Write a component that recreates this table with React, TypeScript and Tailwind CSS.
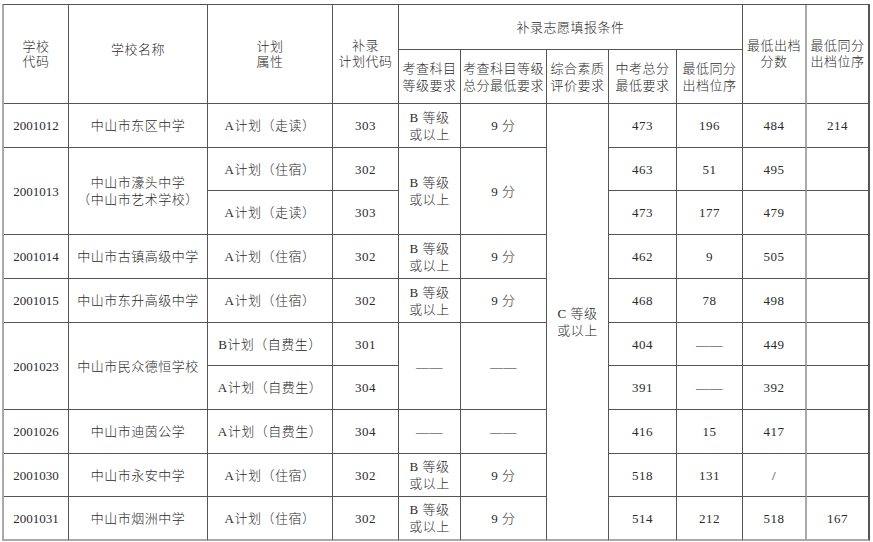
import type { ReactNode } from "react";

const base =
  "flex items-center justify-center text-center border-r border-b border-[#555] whitespace-pre-line";

function Cell({ children, className = "" }: { children?: ReactNode; className?: string }) {
  return <div className={`${base} ${className}`}>{children}</div>;
}

// last column keeps the heavy right edge
const R = "border-r-2";
// column "最低出档分数" has a lighter double-width line on its right
const L = "border-r-2 border-r-[#aaa]";
const B = "border-b-2 border-b-[#aaa]";

export default function App() {
  return (
    <div className="min-h-screen bg-white pt-[4px] pl-[2px]">
      <div
        className="grid w-max grid-cols-[65px_139px_125px_66px_62px_86px_62px_68px_66px_64px_63px] grid-rows-[45px_54px_44px_43px_44px_44px_44px_43px_44px_44px_43px_44px] border-t border-l-2 border-t-[#555] border-l-[#aaa] text-[13px] leading-[17px] tracking-[0.5px] font-light text-[#2b2b2b]"
        style={{ fontFamily: '"Liberation Serif", "Noto Sans CJK SC", serif' }}
      >
        {/* header */}
        <Cell className="row-span-2 leading-[15px]">{"学校\n代码"}</Cell>
        <Cell className="row-span-2 pb-[10px]">学校名称</Cell>
        <Cell className="row-span-2 leading-[15px]">{"计划\n属性"}</Cell>
        <Cell className="row-span-2 leading-[16px]">{"补录\n计划代码"}</Cell>
        <Cell className="col-span-5">补录志愿填报条件</Cell>
        <Cell className={`row-span-2 leading-[16px] ${L}`}>{"最低出档\n分数"}</Cell>
        <Cell className={`row-span-2 leading-[16px] ${R}`}>{"最低同分\n出档位序"}</Cell>
        <Cell>{"考查科目\n等级要求"}</Cell>
        <Cell>{"考查科目等级\n总分最低要求"}</Cell>
        <Cell>{"综合素质\n评价要求"}</Cell>
        <Cell>{"中考总分\n最低要求"}</Cell>
        <Cell>{"最低同分\n出档位序"}</Cell>

        {/* 2001012 */}
        <Cell className="tracking-normal">2001012</Cell>
        <Cell>中山市东区中学</Cell>
        <Cell>A计划（走读）</Cell>
        <Cell>303</Cell>
        <Cell>{"B 等级\n或以上"}</Cell>
        <Cell>9 分</Cell>
        <Cell className={`row-span-10 ${B}`}>{"C 等级\n或以上"}</Cell>
        <Cell>473</Cell>
        <Cell>196</Cell>
        <Cell className={L}>484</Cell>
        <Cell className={R}>214</Cell>

        {/* 2001013 */}
        <Cell className="row-span-2 tracking-normal">2001013</Cell>
        <Cell className="row-span-2">{"中山市濠头中学\n（中山市艺术学校）"}</Cell>
        <Cell>A计划（住宿）</Cell>
        <Cell>302</Cell>
        <Cell className="row-span-2">{"B 等级\n或以上"}</Cell>
        <Cell className="row-span-2">9 分</Cell>
        <Cell>463</Cell>
        <Cell>51</Cell>
        <Cell className={L}>495</Cell>
        <Cell className={R} />
        <Cell>A计划（走读）</Cell>
        <Cell>303</Cell>
        <Cell>473</Cell>
        <Cell>177</Cell>
        <Cell className={L}>479</Cell>
        <Cell className={R} />

        {/* 2001014 */}
        <Cell className="tracking-normal">2001014</Cell>
        <Cell>中山市古镇高级中学</Cell>
        <Cell>A计划（住宿）</Cell>
        <Cell>302</Cell>
        <Cell>{"B 等级\n或以上"}</Cell>
        <Cell>9 分</Cell>
        <Cell>462</Cell>
        <Cell>9</Cell>
        <Cell className={L}>505</Cell>
        <Cell className={R} />

        {/* 2001015 */}
        <Cell className="tracking-normal">2001015</Cell>
        <Cell>中山市东升高级中学</Cell>
        <Cell>A计划（住宿）</Cell>
        <Cell>302</Cell>
        <Cell>{"B 等级\n或以上"}</Cell>
        <Cell>9 分</Cell>
        <Cell>468</Cell>
        <Cell>78</Cell>
        <Cell className={L}>498</Cell>
        <Cell className={R} />

        {/* 2001023 */}
        <Cell className="row-span-2 tracking-normal">2001023</Cell>
        <Cell className="row-span-2">中山市民众德恒学校</Cell>
        <Cell>B计划（自费生）</Cell>
        <Cell>301</Cell>
        <Cell className="row-span-2">——</Cell>
        <Cell className="row-span-2">——</Cell>
        <Cell>404</Cell>
        <Cell>——</Cell>
        <Cell className={L}>449</Cell>
        <Cell className={R} />
        <Cell>A计划（自费生）</Cell>
        <Cell>304</Cell>
        <Cell>391</Cell>
        <Cell>——</Cell>
        <Cell className={L}>392</Cell>
        <Cell className={R} />

        {/* 2001026 */}
        <Cell className="tracking-normal">2001026</Cell>
        <Cell>中山市迪茵公学</Cell>
        <Cell>A计划（自费生）</Cell>
        <Cell>304</Cell>
        <Cell>——</Cell>
        <Cell>——</Cell>
        <Cell>416</Cell>
        <Cell>15</Cell>
        <Cell className={L}>417</Cell>
        <Cell className={R} />

        {/* 2001030 */}
        <Cell className="tracking-normal">2001030</Cell>
        <Cell>中山市永安中学</Cell>
        <Cell>A计划（住宿）</Cell>
        <Cell>302</Cell>
        <Cell>{"B 等级\n或以上"}</Cell>
        <Cell>9 分</Cell>
        <Cell>518</Cell>
        <Cell>131</Cell>
        <Cell className={L}>/</Cell>
        <Cell className={R} />

        {/* 2001031 */}
        <Cell className={`tracking-normal ${B}`}>2001031</Cell>
        <Cell className={B}>中山市烟洲中学</Cell>
        <Cell className={B}>A计划（住宿）</Cell>
        <Cell className={B}>302</Cell>
        <Cell className={B}>{"B 等级\n或以上"}</Cell>
        <Cell className={B}>9 分</Cell>
        <Cell className={B}>514</Cell>
        <Cell className={B}>212</Cell>
        <Cell className={`${L} ${B}`}>518</Cell>
        <Cell className={`${R} ${B}`}>167</Cell>
      </div>
    </div>
  );
}
